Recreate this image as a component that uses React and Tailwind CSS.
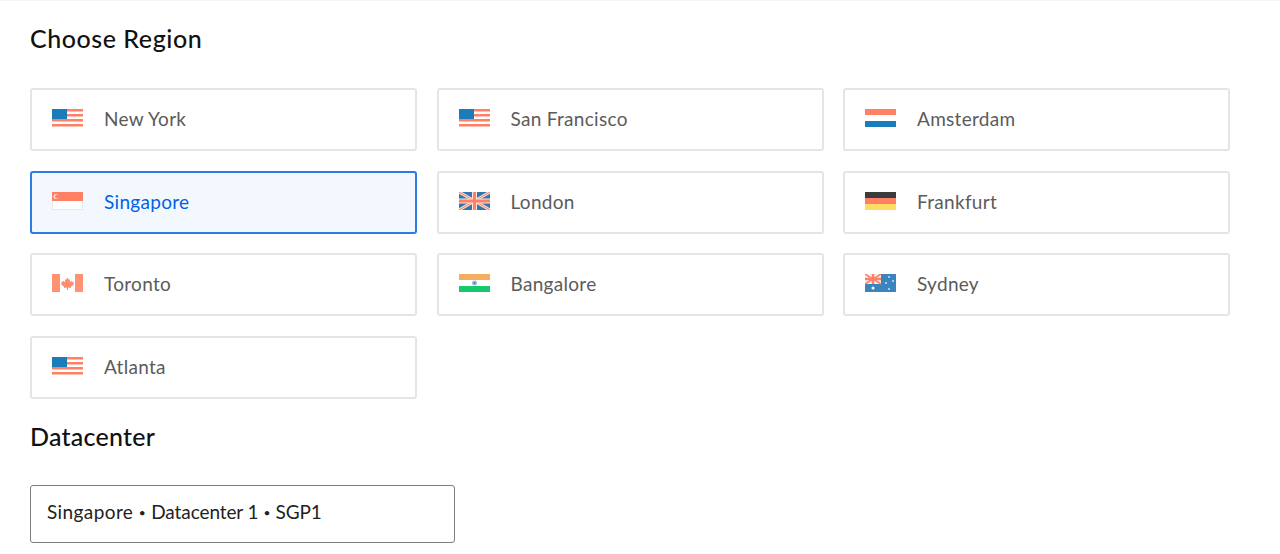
const usFlag = (
  <>
    <rect x="0" y="0" width="31" height="2.500" fill="#ff8064" />
    <rect x="0" y="5" width="31" height="2.500" fill="#ff8064" />
    <rect x="0" y="10" width="31" height="2.500" fill="#ff8064" />
    <rect x="0" y="15" width="31" height="2.500" fill="#ff8064" />
    <rect x="0" y="0" width="15" height="10" fill="#1a7cb8" />
  </>
);

const flags = {
  us: usFlag,
  nl: (
    <>
      <rect width="31" height="6" fill="#ff8064" />
      <rect y="12" width="31" height="6" fill="#1a7cb8" />
    </>
  ),
  sg: (
    <>
      <rect x="0.500" y="0.500" width="30" height="17" fill="#fff" stroke="#e8e8e8" />
      <rect width="31" height="9" fill="#ff8064" />
      <circle cx="4" cy="4.500" r="2.500" fill="#ffe3dc" />
      <circle cx="5" cy="4.500" r="2" fill="#ff8064" />
    </>
  ),
  gb: (
    <>
      <rect width="31" height="18" fill="#2f78ad" />
      <path d="M0 0 31 18M31 0 0 18" stroke="#ffd9cf" strokeWidth="3" />
      <path d="M0 0 31 18M31 0 0 18" stroke="#ff8064" strokeWidth="1" />
      <path d="M15.500 0V18M0 9H31" stroke="#ffe3dc" strokeWidth="5" />
      <path d="M15.500 0V18M0 9H31" stroke="#ff8064" strokeWidth="3" />
    </>
  ),
  de: (
    <>
      <rect width="31" height="6" fill="#3c3c3c" />
      <rect y="6" width="31" height="6" fill="#ff8064" />
      <rect y="12" width="31" height="6" fill="#ffdc64" />
    </>
  ),
  ca: (
    <>
      <rect width="8" height="18" fill="#ff9270" />
      <rect x="23" width="8" height="18" fill="#ff9270" />
      <path
        d="M15.500 3.500l1.400 2.200 1.300-.5-.4 3 2-1.400.5 1.300 1.700-.3-.7 2.200.7.6-3.200 2.200.3 1.200-3-.4V16h-1.200v-2.400l-3 .4.3-1.200L9 10.600l.7-.6L9 7.800l1.700.3.500-1.300 2 1.400-.4-3 1.300.5z"
        fill="#ff8c6c"
      />
    </>
  ),
  in: (
    <>
      <rect width="31" height="6" fill="#f4ae5e" />
      <rect y="12" width="31" height="6" fill="#14c96e" />
      <circle cx="15.500" cy="9" r="2.500" fill="#9cb8dc" />
      <circle cx="15.500" cy="9" r="1" fill="#4f83bd" />
    </>
  ),
  au: (
    <>
      <rect width="31" height="18" fill="#3a85bd" />
      <rect width="16" height="10" fill="#f5f0ee" />
      <path d="M0 0 16 10M16 0 0 10" stroke="#ff8064" strokeWidth="1.500" />
      <path d="M8 0V10M0 5H16" stroke="#ff8064" strokeWidth="2.500" />
      <circle cx="8" cy="14" r="1.500" fill="#fff" />
      <circle cx="24" cy="3" r="1" fill="#cfe3f2" />
      <circle cx="28" cy="7" r="1" fill="#cfe3f2" />
      <circle cx="21" cy="9" r="1" fill="#cfe3f2" />
      <circle cx="24" cy="15" r="1" fill="#cfe3f2" />
    </>
  ),
};

const regions = [
  { name: 'New York', flag: 'us' },
  { name: 'San Francisco', flag: 'us' },
  { name: 'Amsterdam', flag: 'nl' },
  { name: 'Singapore', flag: 'sg', selected: true },
  { name: 'London', flag: 'gb' },
  { name: 'Frankfurt', flag: 'de' },
  { name: 'Toronto', flag: 'ca' },
  { name: 'Bangalore', flag: 'in' },
  { name: 'Sydney', flag: 'au' },
  { name: 'Atlanta', flag: 'us' },
];

function RegionCard({ name, flag, selected }) {
  return (
    <div
      className={
        selected
          ? 'flex h-[63px] items-center rounded-[3px] border-2 border-[#2a7de1] bg-[#f3f8ff] pl-[20px] text-[#0061eb]'
          : 'flex h-[63px] items-center rounded-[3px] border-2 border-[#e5e5e5] bg-white pl-[20px] text-[#5b5b5b]'
      }
    >
      <svg width="31" height="18" viewBox="0 0 31 18" className="mr-[21px] mt-[-3px] shrink-0">
        {flags[flag]}
      </svg>
      <span className="mt-[-2px] text-[19px] leading-none tracking-[0.3px]">{name}</span>
    </div>
  );
}

export default function App() {
  return (
    <div className="h-[554px] overflow-hidden border-t border-[#f5f5f5] bg-white pl-[30px] font-['Lato','Liberation_Sans',sans-serif]">
      <h2 className="mt-[22px] text-[25px] font-medium leading-[30px] tracking-[0.55px] text-[#111]">Choose Region</h2>
      <div className="mt-[35px] grid w-[1200px] grid-cols-3 gap-[19.5px]">
        {regions.map((region) => (
          <RegionCard key={region.name} {...region} />
        ))}
      </div>
      <h2 className="mt-[22px] text-[25px] font-medium leading-[30px] tracking-[0.25px] text-[#111]">Datacenter</h2>
      <div className="mt-[34px] flex h-[58px] w-[425px] items-center rounded-[3px] border border-[#7d7d7d] pb-[2px] pl-[16px] text-[19px] text-[#222]">
        <span className="tracking-[0.4px]">Singapore</span>
        <span className="mx-[5.500px] text-[12px]">•</span>
        <span className="tracking-[-0.1px]">Datacenter 1</span>
        <span className="mx-[5px] text-[12px]">•</span>
        <span className="tracking-[-0.1px]">SGP1</span>
      </div>
    </div>
  );
}
